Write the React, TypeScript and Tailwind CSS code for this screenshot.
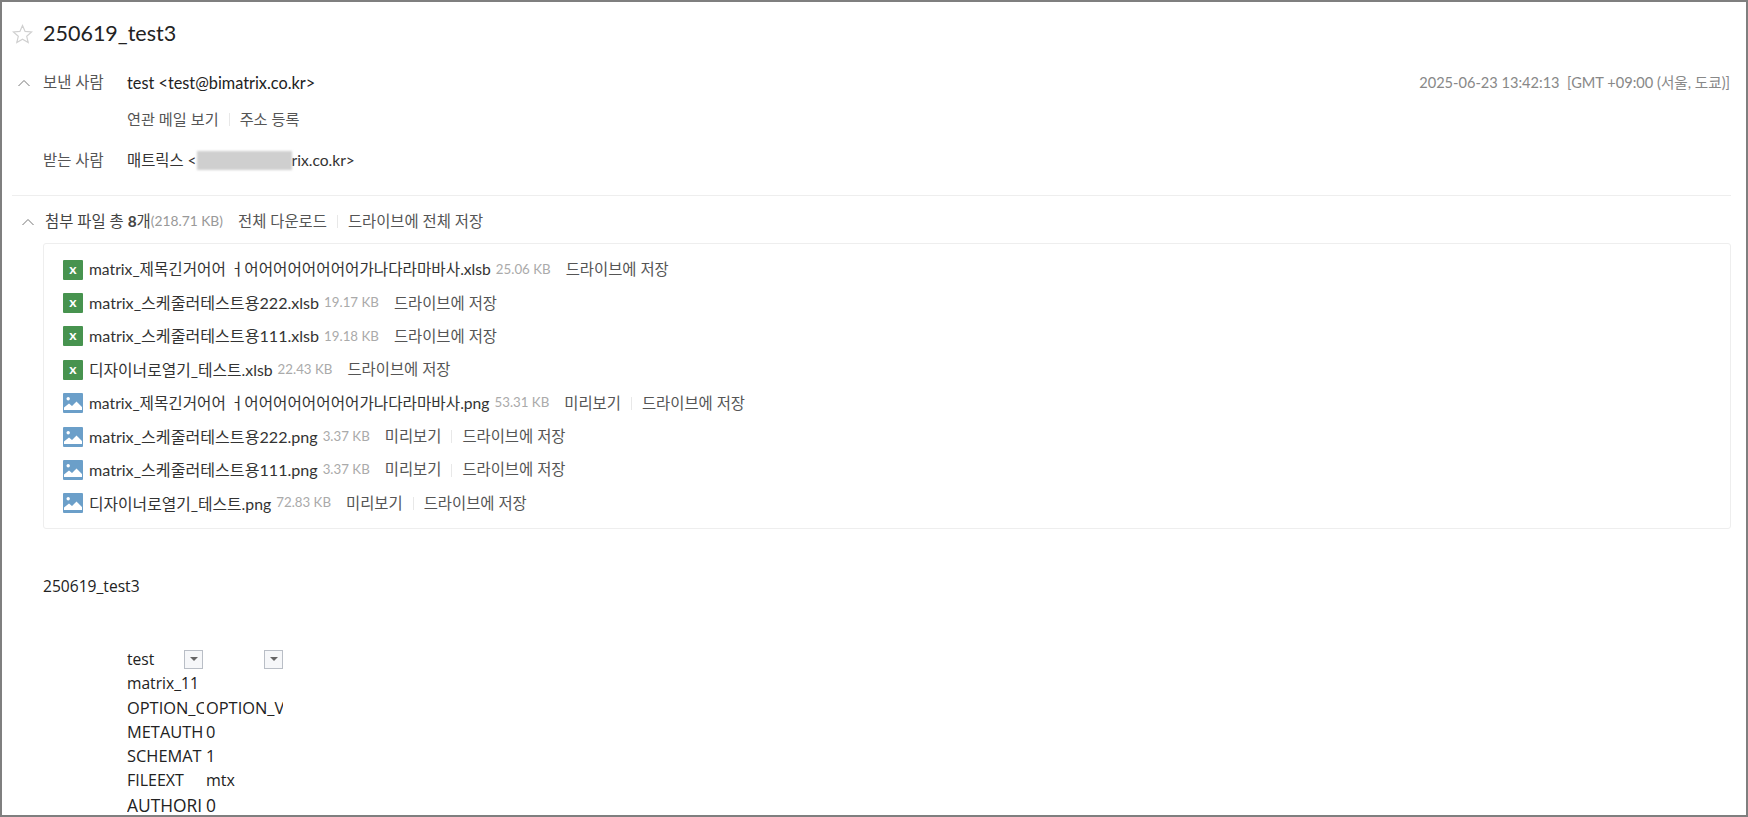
import React from "react";

const LATO = "font-['Lato','Noto_Sans_CJK_KR',sans-serif]";

function Chevron({ className = "" }: { className?: string }) {
  return (
    <svg width="14" height="8" viewBox="0 0 14 8" fill="none" className={className}>
      <path d="M1.5 7L7 1.5L12.5 7" stroke="#777" strokeWidth="1" />
    </svg>
  );
}

function Star() {
  return (
    <svg width="21" height="20" viewBox="0 0 21 20" fill="none">
      <path
        d="M10.5 1.5L13.1 7.4L19.6 8L14.7 12.3L16.2 18.6L10.5 15.3L4.8 18.6L6.3 12.3L1.4 8L7.9 7.4Z"
        stroke="#d0d0d0"
        strokeWidth="1.2"
      />
    </svg>
  );
}

function XlsIcon() {
  return (
    <span className="flex h-5 w-5 shrink-0 items-center justify-center rounded-[1px] bg-[#47934f] pb-[2px] text-[14px] font-bold leading-none text-white">
      x
    </span>
  );
}

function ImgIcon() {
  return (
    <svg width="20" height="20" viewBox="0 0 20 20" className="shrink-0">
      <rect width="20" height="20" rx="1" fill="#6b9fc9" />
      <circle cx="5.2" cy="5.8" r="1.7" fill="#fff" />
      <path d="M1 17V14.5L6 10.5L9 13L13.5 8.5L19 14V17Z" fill="#fff" />
    </svg>
  );
}

function Sep() {
  return <span className="mx-[10px] h-[13px] w-px bg-[#e8e8e8]" />;
}

type Row = { kind: "x" | "i"; name: string; size: string; cls: string };

const rows: Row[] = [
  { kind: "x", name: "matrix_제목긴거어어 ㅓ어어어어어어어어가나다라마바사.xlsb", size: "25.06 KB", cls: "text-[15.65px]" },
  { kind: "x", name: "matrix_스케줄러테스트용222.xlsb", size: "19.17 KB", cls: "text-[16.1px]" },
  { kind: "x", name: "matrix_스케줄러테스트용111.xlsb", size: "19.18 KB", cls: "text-[16.1px]" },
  { kind: "x", name: "디자이너로열기_테스트.xlsb", size: "22.43 KB", cls: "text-[15.8px]" },
  { kind: "i", name: "matrix_제목긴거어어 ㅓ어어어어어어어어가나다라마바사.png", size: "53.31 KB", cls: "text-[15.65px]" },
  { kind: "i", name: "matrix_스케줄러테스트용222.png", size: "3.37 KB", cls: "text-[16.1px]" },
  { kind: "i", name: "matrix_스케줄러테스트용111.png", size: "3.37 KB", cls: "text-[16.1px]" },
  { kind: "i", name: "디자이너로열기_테스트.png", size: "72.83 KB", cls: "text-[15.8px]" },
];

const table: { a: string; b: string; cls: string }[] = [
  { a: "matrix_11", b: "", cls: "text-[15.6px]" },
  { a: "OPTION_C", b: "OPTION_V", cls: "text-[16.4px]" },
  { a: "METAUTH", b: "0", cls: "text-[16.4px]" },
  { a: "SCHEMAT", b: "1", cls: "text-[16.4px]" },
  { a: "FILEEXT", b: "mtx", cls: "text-[16px]" },
  { a: "AUTHORI", b: "0", cls: "text-[17.4px]" },
];

function FilterButton() {
  return (
    <span className="flex h-[19px] w-[19px] items-center justify-center border border-[#b9bec6] bg-[#f6f7f9]">
      <span className="h-0 w-0 border-x-[4px] border-t-[4px] border-x-transparent border-t-[#666]" />
    </span>
  );
}

export default function App() {
  return (
    <div className={`h-[817px] overflow-hidden border-2 border-[#7f7f7f] bg-white ${LATO}`}>
      <div className="flex h-[63px] items-center pl-[10px]">
        <Star />
        <h1 className="ml-[10px] text-[21.5px] leading-none text-[#222]">250619_test3</h1>
      </div>

      <div className="flex h-[36px] items-center pl-[15px] pr-[16px]">
        <Chevron />
        <span className="ml-[12px] w-[84px] text-[15.4px] text-[#555]">보낸 사람</span>
        <span className="text-[16.3px] text-[#222]">test &lt;test@bimatrix.co.kr&gt;</span>
        <span className="ml-auto text-[14.6px] text-[#888]">
          2025-06-23 13:42:13&nbsp; [GMT +09:00 (서울, 도쿄)]
        </span>
      </div>

      <div className="flex h-[36px] items-center pl-[125px] text-[15.2px] text-[#555]">
        <span>연관 메일 보기</span>
        <Sep />
        <span>주소 등록</span>
      </div>

      <div className="flex h-[47px] items-center pl-[41px]">
        <span className="w-[84px] text-[15.4px] text-[#555]">받는 사람</span>
        <span className="text-[15.4px] text-[#333]">매트릭스 &lt;</span>
        <span className="h-[19px] w-[95px] bg-[#cfcfcf] blur-[1px]" />
        <span className="text-[15.6px] text-[#333]">rix.co.kr&gt;</span>
      </div>

      <div className="ml-[10px] mr-[15px] mt-[11px] border-t border-[#eeeeee]" />

      <div className="flex h-[47px] items-center pl-[19px] pt-[4px] text-[15.4px]">
        <Chevron />
        <span className="ml-[10px] text-[#444]">
          첨부 파일 총 <b className="font-bold">8</b>개
        </span>
        <span className="text-[13.8px] text-[#999]">(218.71 KB)</span>
        <span className="ml-[15px] text-[#555]">전체 다운로드</span>
        <Sep />
        <span className="text-[#555]">드라이브에 전체 저장</span>
      </div>

      <div className="ml-[41px] mr-[15px] h-[286px] rounded-[3px] border border-[#eeeeee] pl-[19px] pt-[9px] text-[15.4px]">
        {rows.map((r, i) => (
          <div key={i} className="flex h-[33.4px] items-center">
            {r.kind === "x" ? <XlsIcon /> : <ImgIcon />}
            <span className={`ml-[6px] text-[#333] ${r.cls}`}>{r.name}</span>
            <span className="ml-[5px] text-[13.3px] text-[#aaa]">{r.size}</span>
            {r.kind === "i" && (
              <>
                <span className="ml-[15px] text-[#555]">미리보기</span>
                <Sep />
              </>
            )}
            <span className={r.kind === "i" ? "text-[#555]" : "ml-[15px] text-[#555]"}>드라이브에 저장</span>
          </div>
        ))}
      </div>

      <div className="mt-[47px] pl-[41px] font-['Open_Sans','Noto_Sans_CJK_KR',sans-serif] text-[15.6px] leading-[20px] text-[#222]">
        250619_test3
      </div>

      <div className="ml-[125px] mt-[51px] w-[156px] overflow-hidden font-['Open_Sans','Noto_Sans_CJK_KR',sans-serif] text-[15.6px] leading-[24.3px] text-[#222]">
        <div className="grid h-[24.3px] grid-cols-[80px_76px] items-center">
          <div className="flex items-center justify-between pr-[4px]">
            <span>test</span>
            <FilterButton />
          </div>
          <div className="flex justify-end">
            <FilterButton />
          </div>
        </div>
        {table.map((t, i) => (
          <div key={i} className={`grid h-[24.3px] grid-cols-[77px_77px] gap-x-[2px] ${t.cls}`}>
            <span className="overflow-hidden whitespace-nowrap">{t.a}</span>
            <span className="overflow-hidden whitespace-nowrap">{t.b}</span>
          </div>
        ))}
      </div>
    </div>
  );
}
